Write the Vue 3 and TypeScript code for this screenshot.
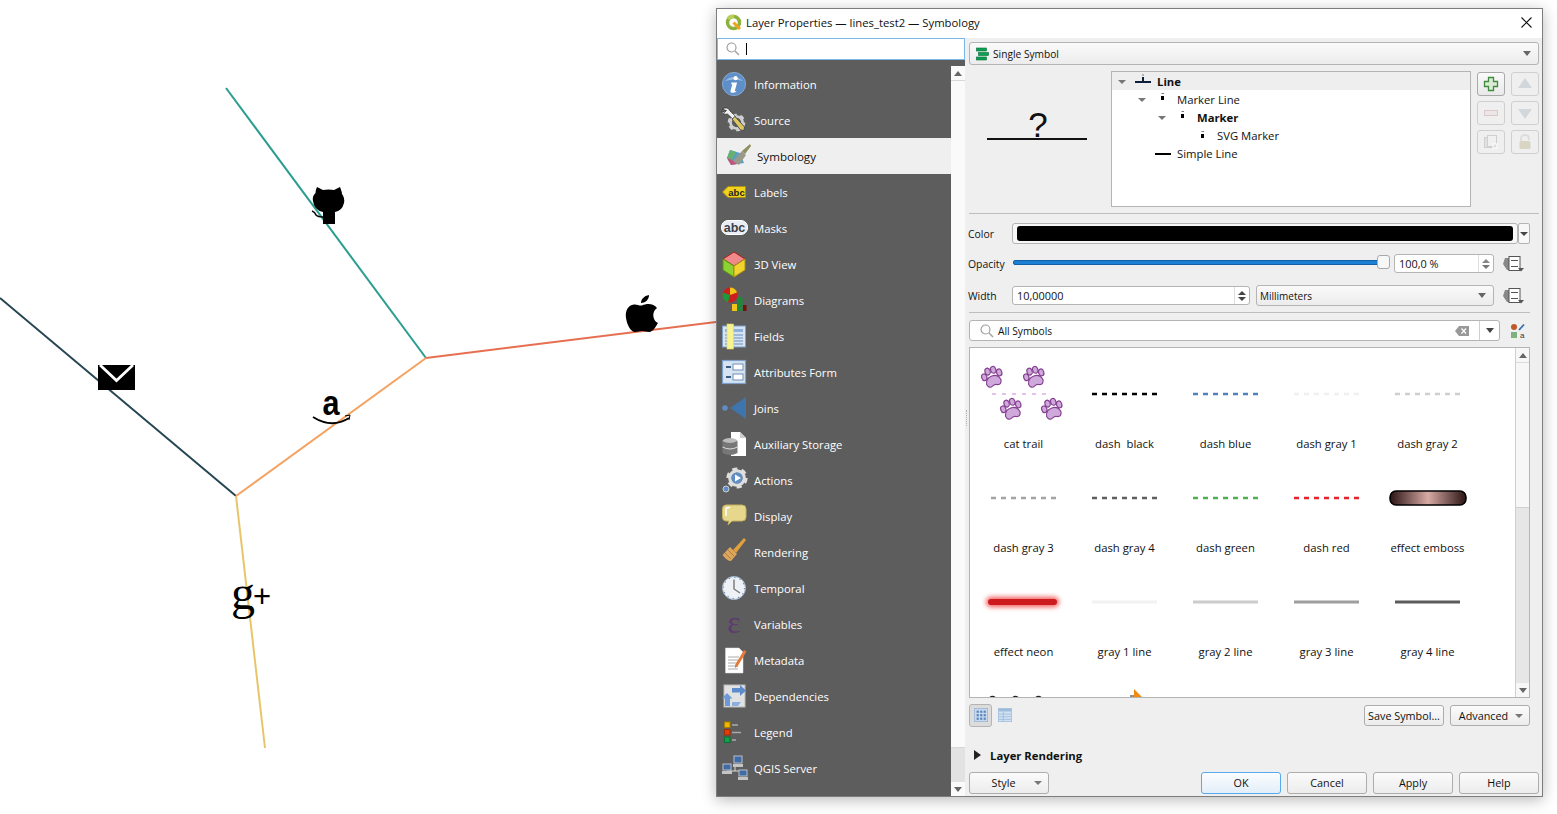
<script setup lang="ts">
interface NavItem { key: string; label: string }
interface Sym { name: string; color?: string; width?: number; dash?: string; kind?: string }

const NAV: NavItem[] = [
  { key: 'info', label: 'Information' },
  { key: 'source', label: 'Source' },
  { key: 'symbology', label: 'Symbology' },
  { key: 'labels', label: 'Labels' },
  { key: 'masks', label: 'Masks' },
  { key: 'view3d', label: '3D View' },
  { key: 'diagrams', label: 'Diagrams' },
  { key: 'fields', label: 'Fields' },
  { key: 'form', label: 'Attributes Form' },
  { key: 'joins', label: 'Joins' },
  { key: 'aux', label: 'Auxiliary Storage' },
  { key: 'actions', label: 'Actions' },
  { key: 'display', label: 'Display' },
  { key: 'rendering', label: 'Rendering' },
  { key: 'temporal', label: 'Temporal' },
  { key: 'variables', label: 'Variables' },
  { key: 'metadata', label: 'Metadata' },
  { key: 'deps', label: 'Dependencies' },
  { key: 'legend', label: 'Legend' },
  { key: 'server', label: 'QGIS Server' },
  { key: 'digitizing', label: '' },
]

const gear = (cx: number, cy: number, r: number, c: string) =>
  `<circle cx="${cx}" cy="${cy}" r="${r}" fill="none" stroke="${c}" stroke-width="${r * 0.45}"/>` +
  `<circle cx="${cx}" cy="${cy}" r="${r * 1.25}" fill="none" stroke="${c}" stroke-width="${r * 0.45}" stroke-dasharray="${r * 0.7} ${r * 0.6}"/>`

const ICONS: Record<string, string> = {
  info: '<circle cx="12" cy="12" r="11.6" fill="#5f8fc8" stroke="#8fb3dc" stroke-width=".8"/><path d="M3 9Q12 1 21 9Q12 6 3 9Z" fill="#9dbde0"/><circle cx="13.6" cy="6.2" r="2.1" fill="#fff"/><path d="M9.5 10.5h5.6l-2.2 8q-.2 1 1.4.4l-.3 1.1q-2 1.1-4.4.7-1.700-.4-1.100-2l1.800-6.500H9.200Z" fill="#fff"/>',
  source: gear(14.5, 14.5, 6, '#cfcfcf') + '<path d="M0 1Q6 -2 8 3L14 9l-2.500 2.500L5.500 6Q1 7 -.5 3L2.500 4.500 4.500 2.500Z" fill="#f2f2f2" stroke="#222" stroke-width=".6"/><path d="M10 11l3-2.500 9.500 10.500-.5 3.500-3.500-.5Z" fill="#e2c65a" stroke="#394a60" stroke-width=".9"/>',
  symbology: '<path d="M2 14 5 6 15 9 19 19 6 21Z" fill="#5a9ec9"/><path d="M2 14 5 6 11 8 7 16Z" fill="#67b070"/><path d="M2 14 7 16 12 20 6 21Z" fill="#c6537a"/><path d="M8 17 17 7 21 11 14 21Z" fill="#9a9a8a"/><path d="M17 7 25 0l1 2-6 8Z" fill="#8f8f62"/>',
  labels: '<path d="M.5 12 6 6.500h17.500v11H6Z" fill="#f1d21d" stroke="#a99016"/><text x="14.500" y="15.500" font-family="Liberation Sans" font-weight="700" font-size="9.500" text-anchor="middle" fill="#222">abc</text>',
  masks: '<rect x="-.5" y="4.500" width="26" height="14" rx="6.500" fill="#e9eef5" stroke="#fff"/><text x="12.500" y="16" font-family="Liberation Sans" font-weight="700" font-size="12.500" text-anchor="middle" fill="#3d4048">abc</text>',
  view3d: '<path d="M12 0 23 7 12 14 1 7Z" fill="#f08a8a" stroke="#b01c1c"/><path d="M1 7 12 14V25L1 18Z" fill="#8cd230" stroke="#5a9410"/><path d="M23 7 12 14V25L23 18Z" fill="#f2d32f" stroke="#a69210"/>',
  diagrams: '<circle cx="8" cy="7" r="7.500" fill="#cc1e1e"/><path d="M8 7V-.5A7.500 7.500 0 0 1 15 4.500Z" fill="#f2c318"/><path d="M8 7 1 4.500A7.500 7.500 0 0 0 6 14.500Z" fill="#1c9a3a"/><rect x="10" y="16" width="5" height="7" fill="#f2c318"/><rect x="16" y="9" width="4.500" height="14" fill="#1c8a36"/><rect x="21" y="17" width="3.500" height="6" fill="#7a0f0f"/>',
  fields: '<rect x=".5" y="2" width="23" height="21" fill="#d5e3f3" stroke="#7ea0c8"/><rect x="3" y="5" width="18" height="3" fill="#8db1da"/><path d="M3 11h18M3 14h18M3 17h18M3 20h18" stroke="#6f8fb8"/><rect x="5" y="0" width="6.500" height="25" fill="#f7f38e" stroke="#dfdb60" stroke-width=".6"/>',
  form: '<rect x=".5" y=".5" width="23" height="23" fill="#d5e3f3" stroke="#7ea0c8" stroke-width="1.200"/><rect x="11" y="4" width="10" height="6" fill="#fff" stroke="#6f8fb8"/><rect x="11" y="14" width="10" height="6" fill="#fff" stroke="#6f8fb8"/><path d="M4 7h5M4 17h5" stroke="#3e5d85" stroke-width="2"/>',
  joins: '<circle cx="3" cy="12" r="2.800" fill="#5d8dc4"/><path d="M24 1V23L8 12Z" fill="#3f74ad"/>',
  aux: '<path d="M9 0h9l6 6v18H9Z" fill="#fff"/><path d="M18 0v6h6Z" fill="#ccc"/><ellipse cx="8" cy="9" rx="7.500" ry="3" fill="#bbb"/><path d="M.5 9V21Q8 25 15.500 21V9Q8 13 .5 9Z" fill="#777"/><path d="M.5 15Q8 19 15.500 15" stroke="#ddd" fill="none"/>',
  actions: gear(15, 10, 7.2, '#dedede') + '<circle cx="15" cy="10" r="5.500" fill="#5f8fc8"/><path d="M13 6.500 19 10l-6 3.500Z" fill="#fff"/><circle cx="4" cy="21" r="3" fill="#5f8fc8" stroke="#ccc"/>',
  display: '<path d="M4 1H20Q24 1 24 5V13Q24 17 20 17H10L6 21 7 17H4Q.5 17 .5 13V5Q.5 1 4 1Z" fill="#e6d78d" stroke="#c4b260"/><path d="M4 12V5Q4 3.500 8 3.500" stroke="#fff" stroke-width="1.500" fill="none"/>',
  rendering: '<path d="M8 7 15 14 9 21Q5 21 .5 15Z" fill="#dba55b"/><path d="M3 13 9 19M6 10 12 16" stroke="#b47f3a"/><path d="M11 10 22 -2l2 2L14 13Z" fill="#e2a03c"/>',
  temporal: '<circle cx="12" cy="12" r="11.500" fill="#eef1f5" stroke="#9fb4cc"/><circle cx="12" cy="12" r="10.500" fill="none" stroke="#6f8fb8" stroke-width="1.200" stroke-dasharray="1.200 4.300"/><path d="M12 3.500V13l6 4" stroke="#777" stroke-width="1.400" fill="none"/>',
  variables: '<text x="12" y="21" font-family="Liberation Serif" font-size="32" text-anchor="middle" fill="#5e3a70">ε</text>',
  metadata: '<path d="M3.500 0H17l4 4V25H3.500Z" fill="#fff" stroke="#ddd" stroke-width=".5"/><path d="M6 9h11M6 12h11M6 15h10M6 18h10M6 21h10" stroke="#aaa"/><path d="M13 17 22 2l2.500 1.500-9 15L13 20Z" fill="#e57a3a"/>',
  deps: '<rect x="2" y="1" width="21" height="22" fill="#e2e2e2" stroke="#bbb"/><path d="M6 4h8V1l6 5.500-6 5.500V8.500H6Z" fill="#5d8ccc" transform="translate(4 0)"/><path d="M5 9l5.500 5.500H8V22H3v-7.500H0Z" fill="#6d9ad6"/><path d="M10 18h9l-3 4h-6Z" fill="#8cb0df"/>',
  legend: '<rect x="2.500" y="2" width="5.500" height="5.500" fill="#f2b705" stroke="#a57e00"/><rect x="2.500" y="9.500" width="5.500" height="5.500" fill="#e63c0a" stroke="#9e2a06"/><rect x="2.500" y="17" width="5.500" height="5.500" fill="#0fa24a" stroke="#0a6e32"/><path d="M10 5h6M10 12.500h9M10 20h4" stroke="#aaa" stroke-width="1.500"/>',
  server: '<path d="M13 8V15M5 15H21M5 15v2M21 15v2" stroke="#ddd"/><rect x="12" y="0" width="8" height="7" fill="#3f6ba6" stroke="#b9c0c9"/><rect x="11" y="8" width="10" height="3" fill="#c4c4c4"/><rect x="1" y="8" width="8" height="6" fill="#3f6ba6" stroke="#b9c0c9"/><rect x="0" y="15" width="10" height="3" fill="#c4c4c4"/><rect x="17" y="14" width="8" height="6" fill="#3f6ba6" stroke="#b9c0c9"/><rect x="16" y="21" width="10" height="3" fill="#c4c4c4"/>',
  digitizing: '<path d="M0 23H20" stroke="#ddd" stroke-width="2"/><path d="M18 23 22 17l1 6Z" fill="#e6d35a"/>',
}

const SYMBOLS: Sym[] = [
  { name: 'cat trail', kind: 'cat' },
  { name: 'dash  black', color: '#000', width: 2.6, dash: '5 5' },
  { name: 'dash blue', color: '#4f81bd', width: 2.6, dash: '5 5' },
  { name: 'dash gray 1', color: '#f0f0f0', width: 2.6, dash: '5 5' },
  { name: 'dash gray 2', color: '#cfcfcf', width: 2.6, dash: '5 5' },
  { name: 'dash gray 3', color: '#a3a3a3', width: 2.6, dash: '5 5' },
  { name: 'dash gray 4', color: '#5e5e5e', width: 2.6, dash: '5 5' },
  { name: 'dash green', color: '#4caf50', width: 2.6, dash: '5 5' },
  { name: 'dash red', color: '#e3232b', width: 2.6, dash: '5 5' },
  { name: 'effect emboss', kind: 'emboss' },
  { name: 'effect neon', kind: 'neon' },
  { name: 'gray 1 line', color: '#f2f2f2', width: 3 },
  { name: 'gray 2 line', color: '#cccccc', width: 3 },
  { name: 'gray 3 line', color: '#9e9e9e', width: 3 },
  { name: 'gray 4 line', color: '#5c5c5c', width: 3 },
  { name: '', kind: 'rings' },
  { name: '', kind: 'arrow' },
]

const PAWS = [
  [18.5, 24],
  [60.5, 24],
  [37.5, 56],
  [78.5, 56],
]
</script>

<template>
  <div class="desktop">
    <svg class="canvas" width="716" height="814" viewBox="0 0 716 814">
      <g fill="none" stroke-width="2">
        <path d="M226 88 426 358" stroke="#2a9d8f" />
        <path d="M0 298 236 496" stroke="#264653" />
        <path d="M426 358 716 322" stroke="#e76f51" />
        <path d="M236 496 426 358" stroke="#f4a261" />
        <path d="M236 496 265 748" stroke="#e9c46a" />
      </g>
      <path d="M317 187 323 190Q328.500 189 334 190L340 187Q342 192 342 194 345 198 344 203 342 211 335 212V224H323V212Q314 210 313 201 312 196 315.500 193 315.500 190 317 187Z" />
      <path d="M312 211Q315 212 316 215 318 217 323 217" fill="none" stroke="#000" stroke-width="1.500" />
      <rect x="98" y="365" width="37" height="25" />
      <path d="M100 365 116.500 380.500 133 365" fill="none" stroke="#fff" stroke-width="2.800" />
      <path d="M634 304.500C628 305 625 311 626 318 627 325 631 332 635 332 638 332 639 331 642 331 645 331 646 332 649 332 653 332 656 326 658 323 653 321 651 312 657 308 654 303.500 647 303 642 305.500 639 306 637 304 634 304.500Z" />
      <path d="M641 303C641 299 644 296 649 295 649 299 646 303 641 303Z" />
      <text class="amazon" transform="translate(331 415) scale(.85 1)">a</text>
      <path d="M313 417Q332 429 349 418" fill="none" stroke="#000" stroke-width="1.800" />
      <path d="M345 416 350 415 349 420" fill="none" stroke="#000" stroke-width="1" />
      <text x="231" y="609" class="gplus">g<tspan class="gplus-plus" dx="-2" dy="-2">+</tspan></text>
    </svg>

    <section class="dialog">
      <header class="titlebar">
        <svg class="qgis" width="17" height="17" viewBox="0 0 17 17">
          <circle cx="8.500" cy="8.500" r="6" fill="none" stroke="#8fb03a" stroke-width="3.500" />
          <path d="M8.500 8.500 15 15" stroke="#f0a31c" stroke-width="3" />
          <path d="M3 5A6 6 0 0 1 9 2.500" fill="none" stroke="#b7cf55" stroke-width="3.500" />
        </svg>
        <span class="title">Layer Properties — lines_test2 — Symbology</span>
        <svg class="close" width="11" height="11" viewBox="0 0 11 11">
          <path d="M.5.5 10.500 10.500M10.500.5.5 10.500" stroke="#111" stroke-width="1.100" />
        </svg>
      </header>

      <div class="main">
        <aside class="left">
          <div class="nav-search">
            <svg width="14" height="14" viewBox="0 0 14 14">
              <circle cx="5.500" cy="5.500" r="4.500" fill="none" stroke="#a0a0a0" stroke-width="1.200" />
              <path d="M9 9 13 13" stroke="#a0a0a0" stroke-width="1.500" />
            </svg>
            <i class="caret"></i>
          </div>
          <div class="nav-body">
            <nav class="nav">
              <div
                v-for="item in NAV"
                :key="item.key"
                class="nav-row"
                :class="{ selected: item.key === 'symbology' }"
              >
                <svg class="nav-icon" width="26" height="26" viewBox="-1 -1 26 26" v-html="ICONS[item.key]"></svg>
                <span>{{ item.label }}</span>
              </div>
            </nav>
            <div class="nav-scroll">
              <div class="sb-btn"><i class="tri up"></i></div>
              <div class="sb-thumb"></div>
              <div class="sb-track"></div>
              <div class="sb-btn"><i class="tri"></i></div>
            </div>
          </div>
        </aside>

        <div class="panel">
          <i class="grip"></i>
          <div class="combo render-combo">
            <svg width="14" height="14" viewBox="0 0 14 14">
              <rect x=".5" y="1" width="10" height="3" fill="#0aa050" stroke="#06703a" stroke-width=".6" />
              <rect x="2.500" y="5.500" width="10" height="3" fill="#0aa050" stroke="#06703a" stroke-width=".6" />
              <rect x=".5" y="10" width="10" height="3" fill="#0aa050" stroke="#06703a" stroke-width=".6" />
            </svg>
            <span>Single Symbol</span>
            <i class="tri right"></i>
          </div>

          <div class="symbol-top">
            <div class="preview">
              <span class="qmark">?</span>
              <div class="preview-line"></div>
            </div>
            <div class="tree">
              <div class="tree-row current lv0">
                <i class="tri small"></i>
                <svg width="16" height="16" viewBox="0 0 16 16"><path d="M0 8H16" stroke="#0b1f38" stroke-width="2" /><path d="M8 3V7" stroke="#0b1f38" stroke-width="2" /><path d="M7 1H9" stroke="#777" /></svg>
                <b>Line</b>
              </div>
              <div class="tree-row lv1">
                <i class="tri small"></i>
                <svg width="16" height="16" viewBox="0 0 16 16"><rect x="6" y="4" width="3" height="4" /><path d="M6.500 1.500H9" stroke="#777" /></svg>
                <span>Marker Line</span>
              </div>
              <div class="tree-row lv2">
                <i class="tri small"></i>
                <svg width="16" height="16" viewBox="0 0 16 16"><rect x="6" y="4" width="3" height="4" /><path d="M6.500 1.500H9" stroke="#777" /></svg>
                <b>Marker</b>
              </div>
              <div class="tree-row lv3">
                <i class="tri-gap"></i>
                <svg width="16" height="16" viewBox="0 0 16 16"><rect x="6" y="6" width="3" height="4" /><path d="M6.500 3.500H9" stroke="#777" /></svg>
                <span>SVG Marker</span>
              </div>
              <div class="tree-row lv1">
                <i class="tri-gap"></i>
                <svg width="16" height="16" viewBox="0 0 16 16"><path d="M0 8H16" stroke="#000" stroke-width="2" /></svg>
                <span>Simple Line</span>
              </div>
            </div>
            <div class="tree-tools">
              <button class="tool">
                <svg width="16" height="16" viewBox="0 0 16 16"><path d="M5.500 1.500H10.500V5.500H14.500V10.500H10.500V14.500H5.500V10.500H1.500V5.500H5.500Z" fill="#dcebd6" stroke="#3f8a3c" stroke-width="1.300" /></svg>
              </button>
              <button class="tool off">
                <svg width="16" height="16" viewBox="0 0 16 16"><path d="M8 2 15 12H1Z" fill="#d2d7db" /></svg>
              </button>
              <button class="tool off">
                <svg width="16" height="16" viewBox="0 0 16 16"><rect x="1.500" y="5.500" width="13" height="5" fill="#ece7e7" stroke="#dcc8c8" /></svg>
              </button>
              <button class="tool off">
                <svg width="16" height="16" viewBox="0 0 16 16"><path d="M8 14 15 4H1Z" fill="#d2d7db" /></svg>
              </button>
              <button class="tool off">
                <svg width="16" height="16" viewBox="0 0 16 16"><rect x="1.500" y="3.500" width="9" height="10" fill="#e0e0e0" stroke="#d0d0d0" /><rect x="4.500" y="1.500" width="9" height="11" fill="#f0f0f0" stroke="#cfcfcf" /><rect x="10" y="10" width="4" height="4" fill="#ddd" stroke="#fff" /></svg>
              </button>
              <button class="tool off">
                <svg width="16" height="16" viewBox="0 0 16 16"><path d="M4 7V4.500Q4 1 8 1T12 4.500V6" fill="none" stroke="#dcdcdc" stroke-width="1.800" /><rect x="2.500" y="7" width="11" height="8" rx="1.500" fill="#d8d5c4" /></svg>
              </button>
            </div>
          </div>

          <hr class="sep" />

          <div class="sym-wrap">
            <div class="prop-row color-row">
              <label>Color</label>
              <div class="color-btn"><div class="color-fill"></div></div>
              <div class="color-drop"><i class="tri small dark"></i></div>
            </div>
            <div class="prop-row opacity-row">
              <label>Opacity</label>
              <div class="slider"><div class="slider-fill"></div><div class="slider-handle"></div></div>
              <div class="spin opacity-spin">
                <span>100,0 %</span>
                <div class="spin-btns"><i class="tri up small"></i><i class="tri small"></i></div>
              </div>
              <svg class="dd" width="23" height="18" viewBox="0 0 23 18"><path d="M7 3H2L0 9l4 6h4" fill="#888" /><rect x="6" y="1.500" width="11" height="14" fill="#fff" stroke="#555" /><path d="M8 5.500h7M8 11.500h7" stroke="#555" stroke-width="1.200" /><path d="M15 13h6l-3 3.500Z" fill="#555" /></svg>
            </div>
            <div class="prop-row width-row">
              <label>Width</label>
              <div class="spin width-spin">
                <span>10,00000</span>
                <div class="spin-btns"><i class="tri up small dark"></i><i class="tri small dark"></i></div>
              </div>
              <div class="combo unit-combo"><span>Millimeters</span><i class="tri right"></i></div>
              <svg class="dd" width="23" height="18" viewBox="0 0 23 18"><path d="M7 3H2L0 9l4 6h4" fill="#888" /><rect x="6" y="1.500" width="11" height="14" fill="#fff" stroke="#555" /><path d="M8 5.500h7M8 11.500h7" stroke="#555" stroke-width="1.200" /><path d="M15 13h6l-3 3.500Z" fill="#555" /></svg>
            </div>

            <hr class="sep sep-two" />

            <div class="filter-row">
              <div class="filter">
                <svg width="14" height="14" viewBox="0 0 14 14">
                  <circle cx="5.500" cy="5.500" r="4.500" fill="none" stroke="#a0a0a0" stroke-width="1.200" />
                  <path d="M9 9 13 13" stroke="#a0a0a0" stroke-width="1.500" />
                </svg>
                <span>All Symbols</span>
                <svg class="clear" width="14" height="10" viewBox="0 0 14 10"><path d="M4 0H14V10H4L0 5Z" fill="#999" /><path d="M6.500 2.500 11 7.500M11 2.500 6.500 7.500" stroke="#fff" stroke-width="1.200" /></svg>
                <div class="filter-drop"><i class="tri dark"></i></div>
              </div>
              <svg class="style-mgr" width="16" height="16" viewBox="0 0 16 16">
                <circle cx="4" cy="4" r="3" fill="#c0582a" />
                <path d="M9 7 14 1.500" stroke="#2f6fb0" stroke-width="1.800" />
                <rect x="1" y="9" width="6" height="6" fill="#7fb07f" />
                <text x="10" y="15" font-family="Liberation Sans" font-size="8" fill="#333">a</text>
              </svg>
            </div>

            <div class="symbols">
              <div class="symbol-grid">
                <div v-for="(s, i) in SYMBOLS" :key="i" class="cell">
                  <svg class="swatch" width="100" height="80" viewBox="0 0 100 80">
                    <template v-if="s.kind === 'cat'">
                      <path d="M18 40H78" stroke="#e3c3ea" stroke-width="2" stroke-dasharray="4 6" />
                      <g v-for="(p, j) in PAWS" :key="j" :transform="`translate(${p[0]} ${p[1]}) rotate(-18) scale(1.08)`" fill="#cfa8dc" stroke="#84408f" stroke-width="1.100">
                        <path d="M-7 4Q-6 -2 0 -2T7 4Q6 9 2 7 0 6 -2 7 -6 9 -7 4Z" />
                        <ellipse cx="-7" cy="-3" rx="2.400" ry="3.200" />
                        <ellipse cx="-2.500" cy="-7" rx="2.400" ry="3.200" />
                        <ellipse cx="3" cy="-7" rx="2.400" ry="3.200" />
                        <ellipse cx="7.500" cy="-3" rx="2.400" ry="3.200" />
                      </g>
                    </template>
                    <template v-else-if="s.kind === 'emboss'">
                      <defs>
                        <linearGradient id="emb" x1="0" y1="0" x2="1" y2="0">
                          <stop offset="0" stop-color="#2a1414" />
                          <stop offset=".5" stop-color="#d8aaa5" />
                          <stop offset="1" stop-color="#2a1414" />
                        </linearGradient>
                      </defs>
                      <rect x="12" y="33" width="76" height="14" rx="6" fill="url(#emb)" stroke="#000" stroke-width="1.500" />
                    </template>
                    <template v-else-if="s.kind === 'neon'">
                      <path class="glow" d="M17 40H80" stroke="#f25a5a" stroke-width="10" stroke-linecap="round" />
                      <path d="M17 40H80" stroke="#cc1a1f" stroke-width="6" stroke-linecap="round" />
                    </template>
                    <g v-else-if="s.kind === 'rings'" fill="none" stroke="#222" stroke-width="1.500">
                      <circle cx="18.500" cy="34" r="3.500" />
                      <circle cx="41.500" cy="34" r="3.500" />
                      <circle cx="64.500" cy="34" r="3.500" />
                    </g>
                    <g v-else-if="s.kind === 'arrow'">
                      <path d="M59 23 69 33V36H59Z" fill="#f28a10" />
                      <path d="M55 30 59 30" stroke="#222" />
                    </g>
                    <path v-else d="M17 40H82" :stroke="s.color" :stroke-width="s.width" :stroke-dasharray="s.dash" />
                  </svg>
                  <div class="cell-label">{{ s.name }}</div>
                </div>
              </div>
              <div class="list-scroll">
                <div class="sb-btn"><i class="tri up"></i></div>
                <div class="list-thumb"></div>
                <div class="sb-track"></div>
                <div class="sb-btn"><i class="tri"></i></div>
              </div>
            </div>

            <div class="list-tools">
              <button class="view-btn pressed">
                <svg width="14" height="14" viewBox="0 0 16 16"><rect x=".5" y=".5" width="15" height="15" fill="#c7d9ee" stroke="#9db9da" /><g fill="#5d85b8"><rect x="3" y="3" width="2.500" height="2.500" /><rect x="7" y="3" width="2.500" height="2.500" /><rect x="11" y="3" width="2.500" height="2.500" /><rect x="3" y="7" width="2.500" height="2.500" /><rect x="7" y="7" width="2.500" height="2.500" /><rect x="11" y="7" width="2.500" height="2.500" /><rect x="3" y="11" width="2.500" height="2.500" /><rect x="7" y="11" width="2.500" height="2.500" /><rect x="11" y="11" width="2.500" height="2.500" /></g></svg>
              </button>
              <button class="view-btn">
                <svg width="14" height="14" viewBox="0 0 16 16"><rect x=".5" y=".5" width="15" height="15" fill="#d3e2f2" stroke="#a6c0de" /><rect x="1" y="1" width="14" height="3" fill="#9dbbdc" /><path d="M1 7h14M1 10h14M1 13h14M6 4v11" stroke="#9dbbdc" /></svg>
              </button>
              <button class="btn save-btn">Save Symbol...</button>
              <button class="btn adv-btn">Advanced<i class="tri small"></i></button>
            </div>
          </div>

          <div class="layer-rendering">
            <i class="tri-right"></i>
            <b>Layer Rendering</b>
          </div>

          <div class="footer">
            <button class="btn style-btn">Style<i class="tri small"></i></button>
            <span class="spacer"></span>
            <button class="btn ok">OK</button>
            <button class="btn">Cancel</button>
            <button class="btn">Apply</button>
            <button class="btn">Help</button>
          </div>
        </div>
      </div>
    </section>
  </div>
</template>

<style>
html, body { margin: 0; background: #fff; overflow: hidden; }
</style>

<style scoped>
.desktop {
  position: relative;
  width: 1557px;
  height: 814px;
  background: #fff;
  overflow: hidden;
  font-family: "Open Sans", "Noto Sans", sans-serif;
  font-size: 11.3px;
  color: #111;
}
.canvas { position: absolute; left: 0; top: 0; }
.amazon { font-family: "Liberation Sans", sans-serif; font-weight: 700; font-size: 36px; text-anchor: middle; }
.gplus { font-family: "Liberation Serif", serif; font-size: 48px; }
.gplus-plus { font-family: "Liberation Sans", sans-serif; font-size: 31px; }

.dialog {
  position: absolute;
  left: 716px;
  top: 8px;
  width: 825px;
  height: 787px;
  border: 1px solid #7d7d7d;
  background: #efefef;
  box-shadow: 0 3px 14px rgba(0, 0, 0, 0.28);
  display: flex;
  flex-direction: column;
}
.titlebar {
  height: 27px;
  padding: 0 10px 2px 8px;
  background: #fff;
  display: flex;
  align-items: center;
  flex: none;
}
.qgis { margin-right: 4px; }
.title { flex: 1; font-size: 11.3px; }
.main { flex: 1; display: flex; min-height: 0; }

.left { width: 248px; display: flex; flex-direction: column; flex: none; }
.nav-search {
  height: 18px;
  padding: 1px 0 1px 8px;
  border: 1px solid #7ab8ec;
  background: #fff;
  display: flex;
  align-items: center;
  gap: 6px;
}
.caret { width: 1px; height: 12px; background: #000; }
.nav-body { flex: 1; display: flex; background: #5d5d5d; padding-top: 6px; min-height: 0; }
.nav { width: 234px; overflow: hidden; background: #5d5d5d; margin-top: 0; }
.nav-row {
  height: 36px;
  display: flex;
  align-items: center;
  color: #fff;
  padding-left: 4px;
  font-size: 11.3px;
}
.nav-row span { margin-left: 7px; }
.nav-row.selected { background: #efefef; color: #111; padding-left: 7px; }
.nav-row.selected span { font-size: 11.6px; }
.nav-icon { flex: none; overflow: visible; }
.nav-scroll {
  width: 14px;
  background: #fafafa;
  display: flex;
  flex-direction: column;
}
.sb-btn {
  height: 14px;
  background: #fafafa;
  display: flex;
  align-items: center;
  justify-content: center;
  flex: none;
}
.sb-thumb { flex: 1; background: #fafafa; border-top: 1px solid #d8d8d8; border-bottom: 1px solid #d8d8d8; }
.nav-scroll .sb-track { height: 34px; background: #e2e2e2; flex: none; }

.tri {
  width: 0;
  height: 0;
  display: inline-block;
  border-left: 4.5px solid transparent;
  border-right: 4.5px solid transparent;
  border-top: 5px solid #666;
  flex: none;
}
.tri.up { border-top: 0; border-bottom: 5px solid #666; }
.tri.small { border-left-width: 4px; border-right-width: 4px; border-top-width: 4px; border-top-color: #777; }
.tri.small.up { border-top-width: 0; border-bottom: 4px solid #888; }
.tri.small.dark { border-top-color: #444; }
.tri.small.up.dark { border-bottom-color: #444; }
.tri.dark { border-top-color: #444; }
.tri.right { margin-left: auto; }

.panel { flex: 1; padding: 4px 3px 0 4px; min-width: 0; display: flex; flex-direction: column; position: relative; }
.grip { position: absolute; left: 1px; top: 372px; height: 16px; border-left: 1px dotted #b0b0b0; }
.combo {
  border: 1px solid #b4b4b4;
  border-radius: 3px;
  background: linear-gradient(#fafafa, #ececec);
  display: flex;
  align-items: center;
  padding: 0 7px 0 3px;
  box-sizing: border-box;
}
.render-combo { height: 23px; gap: 3px; flex: none; padding-left: 6px; font-size: 10.2px; }

.symbol-top { display: flex; height: 136px; margin-top: 6px; flex: none; }
.preview { width: 142px; flex: none; display: flex; flex-direction: column; align-items: center; padding: 37px 4px 0 0; box-sizing: border-box; }
.qmark { font-family: "Liberation Sans", sans-serif; font-size: 35px; line-height: 34px; height: 34px; color: #111; }
.preview-line { width: 100px; height: 2px; background: #111; margin: -4px 2px 0 0; }
.tree {
  width: 358px;
  border: 1px solid #b4b4b4;
  background: #fff;
  box-sizing: content-box;
  height: 134px;
  flex: none;
}
.tree-row { height: 18px; box-sizing: border-box; padding-top: 2px; display: flex; align-items: center; line-height: 16px; }
.tree-row.current { background: #eeeeee; }
.tree-row .tri { margin-right: 9px; }
.tree-row svg { margin-right: 6px; }
.tri-gap { width: 17px; flex: none; }
.lv0 { padding-left: 6px; }
.lv1 { padding-left: 26px; }
.lv2 { padding-left: 46px; }
.lv3 { padding-left: 66px; }
.tree-tools {
  display: grid;
  grid-template-columns: 28px 28px;
  grid-template-rows: 24px 24px 24px;
  gap: 5px 6px;
  margin: 1px 0 0 6px;
}
.tool {
  border: 1px solid #a9a9a9;
  border-radius: 3px;
  background: linear-gradient(#fafafa, #e9e9e9);
  padding: 0;
  display: flex;
  align-items: center;
  justify-content: center;
}
.tool.off { border-color: #cfcfcf; background: #efefef; }

.sep { border: 0; border-top: 1px solid #bdbdbd; margin: 6px 0 0; flex: none; height: 0; }
.sym-wrap { width: 561px; flex: none; }
.prop-row { display: flex; align-items: center; height: 21px; }
.prop-row label { width: 43px; flex: none; margin-left: -1px; margin-right: 1px; font-size: 10.4px; }
.color-row { margin-top: 9px; }
.color-btn {
  flex: 1;
  height: 21px;
  border: 1px solid #b4b4b4;
  border-radius: 3px;
  background: #f7f7f7;
  box-sizing: border-box;
  padding: 2px 4px;
}
.color-fill { height: 15px; background: #000; border-radius: 3px; }
.color-drop {
  width: 12px;
  height: 21px;
  border: 1px solid #b4b4b4;
  border-radius: 2px;
  background: #f7f7f7;
  box-sizing: border-box;
  display: flex;
  align-items: center;
  justify-content: center;
}
.opacity-row { margin-top: 9px; }
.slider { width: 377px; height: 16px; position: relative; flex: none; display: flex; align-items: center; margin: 0 0 3px 1px; }
.slider-fill { width: 100%; height: 5px; background: #1b7fd3; border: 1px solid #1160a8; border-radius: 2px; box-sizing: border-box; }
.slider-handle {
  position: absolute;
  right: 0;
  top: 1px;
  width: 13px;
  height: 14px;
  border: 1px solid #a9a9a9;
  border-radius: 3px;
  background: #f7f7f7;
  box-sizing: border-box;
}
.spin {
  height: 19px;
  border: 1px solid #b4b4b4;
  border-radius: 3px;
  background: #fff;
  box-sizing: border-box;
  display: flex;
  align-items: center;
  padding-left: 4px;
  font-size: 10.9px;
}
.spin span { flex: 1; }
.spin-btns { width: 14px; align-self: stretch; border-left: 1px solid #dedede; display: flex; flex-direction: column; align-items: center; justify-content: center; gap: 2px; }
.opacity-spin { width: 100px; margin-left: 4px; }
.dd { margin-left: 9px; flex: none; }
.width-row { margin-top: 11px; }
.width-spin { width: 238px; }
.unit-combo { width: 238px; height: 21px; margin-left: 6px; flex: none; font-size: 10px; }
.sep-two { margin-top: 6px; }
.filter-row { display: flex; align-items: center; margin-top: 7px; height: 21px; }
.filter {
  width: 531px;
  height: 21px;
  box-sizing: border-box;
  border: 1px solid #b4b4b4;
  border-radius: 3px;
  background: #fff;
  display: flex;
  align-items: center;
  padding-left: 10px;
  gap: 4px;
  font-size: 10.2px;
}
.clear { margin-left: auto; margin-right: 6px; }
.filter-drop { width: 19px; align-self: stretch; border-left: 1px solid #cfcfcf; display: flex; align-items: center; justify-content: center; }
.style-mgr { margin-left: 10px; }

.symbols {
  margin-top: 6px;
  height: 351px;
  border: 1px solid #b4b4b4;
  box-sizing: border-box;
  background: #fff;
  display: flex;
  overflow: hidden;
}
.symbol-grid {
  flex: 1;
  display: grid;
  grid-template-columns: repeat(5, 101px);
  grid-auto-rows: 104px;
  padding: 1px 0 0 3px;
  overflow: hidden;
}
.cell { display: flex; flex-direction: column; align-items: center; }
.swatch { margin-top: 5px; flex: none; }
.glow { filter: blur(2.5px); }
.cell-label { margin-top: 2px; height: 16px; line-height: 16px; white-space: pre; }
.list-scroll { width: 14px; background: #e6e6e6; border-left: 1px solid #cfcfcf; display: flex; flex-direction: column; box-sizing: border-box; flex: none; }
.list-scroll .sb-btn { background: #f7f7f7; }
.list-thumb { height: 144px; background: #f7f7f7; border-top: 1px solid #dcdcdc; border-bottom: 1px solid #cfcfcf; flex: none; }
.list-scroll .sb-track { flex: 1; }

.list-tools { display: flex; align-items: center; height: 23px; margin-top: 6px; }
.view-btn {
  width: 23px;
  height: 23px;
  padding: 0 0 1px;
  border: 1px solid transparent;
  border-radius: 3px;
  background: none;
  display: flex;
  align-items: center;
  justify-content: center;
  margin-right: 1px;
}
.view-btn.pressed { border-color: #b4b4b4; background: #dcdcdc; }

.btn {
  width: 80px;
  height: 22px;
  border: 1px solid #adadad;
  border-radius: 3px;
  background: linear-gradient(#fbfbfb, #ececec);
  font: inherit;
  font-size: 10.8px;
  color: #111;
  padding: 0 0 2px;
  position: relative;
  box-sizing: border-box;
}
.btn .tri { position: absolute; right: 6px; top: 8px; }
.save-btn { margin-left: auto; height: 21px; padding: 0; }
.adv-btn { margin-left: 6px; height: 21px; padding: 0 13px 0 0; }
.style-btn { padding-right: 11px; }

.layer-rendering { display: flex; align-items: center; height: 18px; margin-top: 19px; padding-left: 5px; gap: 9px; flex: none; }
.tri-right { width: 0; height: 0; border-top: 5.5px solid transparent; border-bottom: 5.5px solid transparent; border-left: 7px solid #222; }
.layer-rendering b { font-size: 11.3px; }

.footer { display: flex; align-items: center; gap: 6px; margin-top: 8px; height: 22px; flex: none; }
.spacer { flex: 1; }
.ok { border-color: #56a9ee; background: linear-gradient(#fbfdff, #e3eef8); }
</style>
